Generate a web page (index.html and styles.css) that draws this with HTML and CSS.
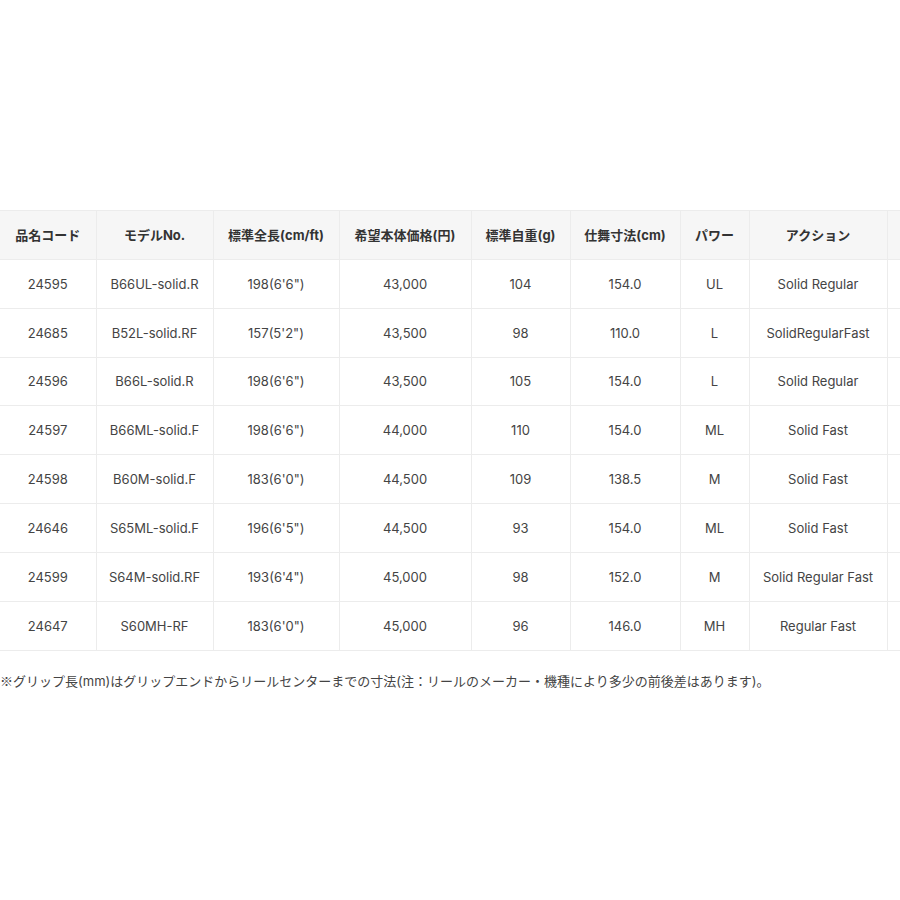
FILE: index.html
```html
<!DOCTYPE html>
<html lang="ja">
<head>
<meta charset="utf-8">
<link rel="stylesheet" href="styles.css">
</head>
<body>
<div class="page">
  <div class="table-wrap">
    <table class="spec">
      <colgroup>
        <col class="c1"><col class="c2"><col class="c3"><col class="c4"><col class="c5"><col class="c6"><col class="c7"><col class="c8"><col class="c9">
      </colgroup>
      <thead>
        <tr>
          <th>品名コード</th><th>モデルNo.</th><th>標準全長(cm/ft)</th><th>希望本体価格(円)</th><th>標準自重(g)</th><th>仕舞寸法(cm)</th><th>パワー</th><th>アクション</th><th>グリップ長(mm)</th>
        </tr>
      </thead>
      <tbody>
        <tr><td>24595</td><td>B66UL-solid.R</td><td>198(6'6")</td><td>43,000</td><td>104</td><td>154.0</td><td>UL</td><td>Solid Regular</td><td>300</td></tr>
        <tr><td>24685</td><td>B52L-solid.RF</td><td>157(5'2")</td><td>43,500</td><td>98</td><td>110.0</td><td>L</td><td>SolidRegularFast</td><td>260</td></tr>
        <tr><td>24596</td><td>B66L-solid.R</td><td>198(6'6")</td><td>43,500</td><td>105</td><td>154.0</td><td>L</td><td>Solid Regular</td><td>300</td></tr>
        <tr><td>24597</td><td>B66ML-solid.F</td><td>198(6'6")</td><td>44,000</td><td>110</td><td>154.0</td><td>ML</td><td>Solid Fast</td><td>300</td></tr>
        <tr><td>24598</td><td>B60M-solid.F</td><td>183(6'0")</td><td>44,500</td><td>109</td><td>138.5</td><td>M</td><td>Solid Fast</td><td>285</td></tr>
        <tr><td>24646</td><td>S65ML-solid.F</td><td>196(6'5")</td><td>44,500</td><td>93</td><td>154.0</td><td>ML</td><td>Solid Fast</td><td>300</td></tr>
        <tr><td>24599</td><td>S64M-solid.RF</td><td>193(6'4")</td><td>45,000</td><td>98</td><td>152.0</td><td>M</td><td>Solid Regular Fast</td><td>300</td></tr>
        <tr><td>24647</td><td>S60MH-RF</td><td>183(6'0")</td><td>45,000</td><td>96</td><td>146.0</td><td>MH</td><td>Regular Fast</td><td>285</td></tr>
      </tbody>
    </table>
  </div>
  <p class="note"><span class="mark">※</span>グリップ長(mm)はグリップエンドからリールセンターまでの寸法(注：リールのメーカー・機種により多少の前後差はあります)。</p>
</div>
</body>
</html>
```

FILE: styles.css
```css
html, body {
  margin: 0;
  padding: 0;
  background: #ffffff;
}

body {
  font-family: Inter, "Noto Sans CJK JP", sans-serif;
  color: #444444;
  font-size: 13px;
  overflow: hidden;
}

.page {
  width: 900px;
  padding-top: 210px;
  overflow: hidden;
}

.table-wrap {
  width: 900px;
  overflow: hidden;
}

.spec {
  border-collapse: collapse;
  table-layout: fixed;
  width: 1047px;
}

.c1 { width: 96px; }
.c2 { width: 117px; }
.c3 { width: 126px; }
.c4 { width: 132px; }
.c5 { width: 99px; }
.c6 { width: 110px; }
.c7 { width: 69px; }
.c8 { width: 138px; }
.c9 { width: 160px; }

.spec th,
.spec td {
  height: 47.85px;
  padding: 0 4px;
  text-align: center;
  vertical-align: middle;
  border: 1px solid #ececec;
  white-space: nowrap;
  line-height: 20px;
}

.spec th:first-child,
.spec td:first-child {
  border-left: none;
}

.spec th {
  background: #f6f6f6;
  color: #333333;
  font-weight: 700;
}

.spec td {
  color: #444444;
}

.note {
  margin: 20px 0 0 0;
  line-height: 20px;
  color: #444444;
  white-space: nowrap;
}

.mark {
  font-family: "Noto Sans CJK JP", sans-serif;
}
```
